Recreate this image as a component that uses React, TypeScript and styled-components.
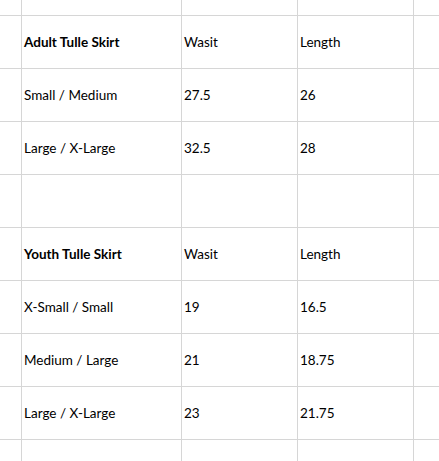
import React from 'react'
import styled, {createGlobalStyle} from 'styled-components'

const GlobalStyle = createGlobalStyle`
	html, body {
		margin: 0;
		padding: 0;
		background: #ffffff;
	}
`

type Row = {
	cells: string[]
	header?: boolean
}

const rows: Row[] = [
	{cells: ['Adult Tulle Skirt', 'Wasit', 'Length'], header: true},
	{cells: ['Small / Medium', '27.5', '26']},
	{cells: ['Large / X-Large', '32.5', '28']},
	{cells: ['', '', '']},
	{cells: ['Youth Tulle Skirt', 'Wasit', 'Length'], header: true},
	{cells: ['X-Small / Small', '19', '16.5']},
	{cells: ['Medium / Large', '21', '18.75']},
	{cells: ['Large / X-Large', '23', '21.75']},
]

const App = () => {
	return (
		<>
			<GlobalStyle />
			<Sheet>
				{[0, 1, 2, 3, 4].map((c) => (
					<Cell key={`top-${c}`} />
				))}
				{rows.map((row, r) => (
					<React.Fragment key={r}>
						<Cell />
						{row.cells.map((text, c) => (
							<Cell key={c} bold={row.header && c === 0}>
								{text}
							</Cell>
						))}
						<Cell />
					</React.Fragment>
				))}
				{[0, 1, 2, 3, 4].map((c) => (
					<Cell key={`bottom-${c}`} />
				))}
			</Sheet>
		</>
	)
}

export default App

const Sheet = styled.div`
	display: grid;
	grid-template-columns: 21px 159px 115px 115px 1fr;
	grid-template-rows: 15px repeat(8, 52px) 22px;
	gap: 1px;
	width: 439px;
	height: 461px;
	overflow: hidden;
	background: #d6d6d6;
	font-family: 'Lato', 'Liberation Sans', sans-serif;
	font-size: 13.5px;
	color: #000000;
`

const Cell = styled.div<{bold?: boolean}>`
	display: flex;
	align-items: center;
	padding: 0 2px;
	background: #ffffff;
	white-space: nowrap;
	overflow: hidden;
	font-weight: ${(p) => (p.bold ? 700 : 400)};
`
